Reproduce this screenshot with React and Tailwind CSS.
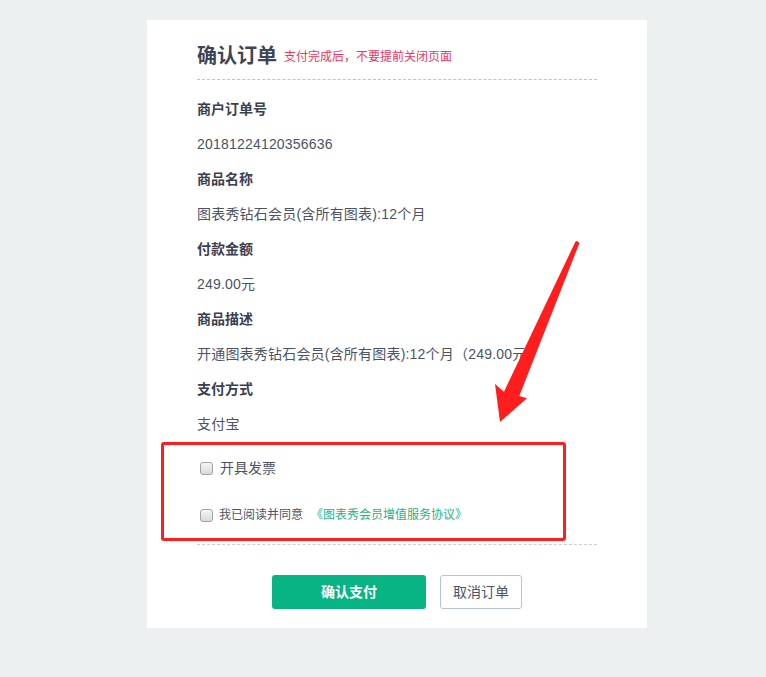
import React from "react";

const items = [
  { label: "商户订单号", value: "20181224120356636" },
  { label: "商品名称", value: "图表秀钻石会员(含所有图表):12个月" },
  { label: "付款金额", value: "249.00元" },
  { label: "商品描述", value: "开通图表秀钻石会员(含所有图表):12个月（249.00元）" },
  { label: "支付方式", value: "支付宝" },
];

const Box = () => (
  <span className="ml-[3px] inline-block h-[13px] w-[13px] shrink-0 rounded-[3px] border border-[#a3a3a3] bg-gradient-to-b from-[#f6f6f6] to-[#d9d9d9]" />
);

const App = () => {
  return (
    <div
      className="min-h-[677px] bg-[#edf0f1] pt-[20px] pb-[50px]"
      style={{ fontFamily: '"Liberation Sans", "Noto Sans CJK SC", sans-serif' }}
    >
      <div className="relative ml-[147px] w-[500px] bg-white px-[50px] pt-[20px] pb-[19px]">
        {/* header */}
        <div className="flex items-center border-b border-dashed border-[#b3c6d3] pb-[7px] leading-[30px]">
          <h1 className="text-[20px] font-bold text-[#3e4555]">确认订单</h1>
          <span className="ml-[7px] mt-[2px] text-[12px] text-[#f5325c]">支付完成后，不要提前关闭页面</span>
        </div>

        {/* detail list */}
        <div className="mt-[12px] overflow-hidden whitespace-nowrap text-[14px] leading-[35px]">
          {items.map((it) => (
            <div key={it.label}>
              <div className="font-bold text-[#3a4050]">{it.label}</div>
              <div className="tracking-[0.2px] text-[#4b5367]">{it.value}</div>
            </div>
          ))}
        </div>

        {/* options */}
        <div className="relative flex flex-col gap-[17px] border-b border-dashed border-[#c9cfd6] pt-[11px] pb-[14px]">
          <label className="flex h-[30px] items-center">
            <Box />
            <span className="ml-[7px] text-[14px] text-[#4b5367]">开具发票</span>
          </label>
          <label className="flex h-[30px] items-center">
            <Box />
            <span className="ml-[6px] text-[12px] text-[#4b5367]">我已阅读并同意</span>
            <a className="ml-[8px] text-[12px] text-[#1eb386]">《图表秀会员增值服务协议》</a>
          </label>
          <div className="pointer-events-none absolute top-0 bottom-[3px] left-[-36px] right-[31px] rounded-[3px] border-[3px] border-[#fe1e1e]" />
        </div>

        {/* buttons */}
        <div className="mt-[30px] flex justify-center gap-[14px]">
          <button className="h-[34px] w-[154px] rounded-[3px] bg-[#08b484] text-[14px] font-bold text-white">
            确认支付
          </button>
          <button className="h-[34px] w-[82px] rounded-[3px] border border-[#b7c3d2] bg-white text-[14px] text-[#4b5367]">
            取消订单
          </button>
        </div>

        {/* annotation arrow */}
        <svg
          className="pointer-events-none absolute left-0 top-0"
          width="500"
          height="607"
          viewBox="0 0 500 607"
        >
          <polygon
            points="430,221 432.5,223 372.3,376 380,378.3 353,402 348,364 357,371.7 428.5,221.5"
            fill="#fe1e1e"
          />
        </svg>
      </div>
    </div>
  );
};

export default App;
